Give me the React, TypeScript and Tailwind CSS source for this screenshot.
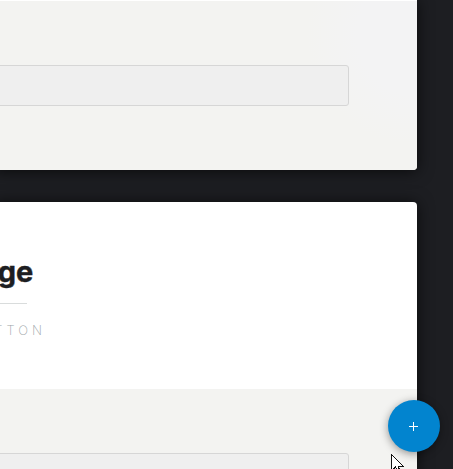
function Field() {
  return <div className="h-[41px] w-[355px] shrink-0 rounded-[3px] border border-[#d6d6d6] bg-[#efefef]" />;
}

export default function App() {
  return (
    <main className="relative flex h-[469px] w-[453px] flex-col gap-8 overflow-hidden bg-[#1d1e22] font-['Inter',sans-serif]">
      <section className="-ml-1.5 flex h-[170px] w-[423px] shrink-0 flex-col overflow-hidden rounded-b border-t border-white bg-[#f3f3f1] bg-[radial-gradient(circle_at_100%_20%,#f3f3f4_60px,#f3f3f1_110px)] pt-16 shadow-[0_1px_16px_rgba(0,0,0,0.7)]">
        <Field />
      </section>

      <section className="-ml-1.5 flex h-[440px] w-[423px] shrink-0 flex-col overflow-hidden rounded-t bg-white shadow-[0_1px_16px_rgba(0,0,0,0.7)]">
        <header className="flex h-[187px] shrink-0 flex-col items-start">
          <h1 className="mt-[50px] flex h-10 w-[39px] justify-end text-[29px] leading-10 font-bold tracking-[-0.2px] text-[#1d1e22] [-webkit-text-stroke:0.4px_#1d1e22]">
            ge
          </h1>
          <div className="mt-[11px] h-px w-[33px] bg-[#d9dcdc]" />
          <p className="mt-4 flex h-5 w-[52px] justify-end text-[13px] leading-5 font-extralight tracking-[4px] text-[#9da6a9]">
            TTON
          </p>
        </header>
        <div className="grow bg-[#f3f3f1] pt-16">
          <Field />
        </div>
      </section>

      <button
        type="button"
        aria-label="Add"
        className="absolute top-[400px] left-[388px] flex size-[52px] items-center justify-center rounded-full bg-[#0284cf] shadow-[0_2px_8px_rgba(0,0,0,0.4)]"
      >
        <svg width="10" height="10" viewBox="0 0 10 10" className="mt-px mr-[3px]" shapeRendering="crispEdges">
          <path d="M5 0h1v9H5zM1 4h9v1H1z" fill="#fff" />
        </svg>
      </button>

      <svg className="absolute top-[454px] left-[391px]" width="13" height="20" viewBox="0 0 13 20" shapeRendering="crispEdges">
        <path d="M.5.5v16l4-3.5 2.5 6 2.5-1-2.5-6h5z" fill="#fff" stroke="#111" />
      </svg>
    </main>
  );
}
